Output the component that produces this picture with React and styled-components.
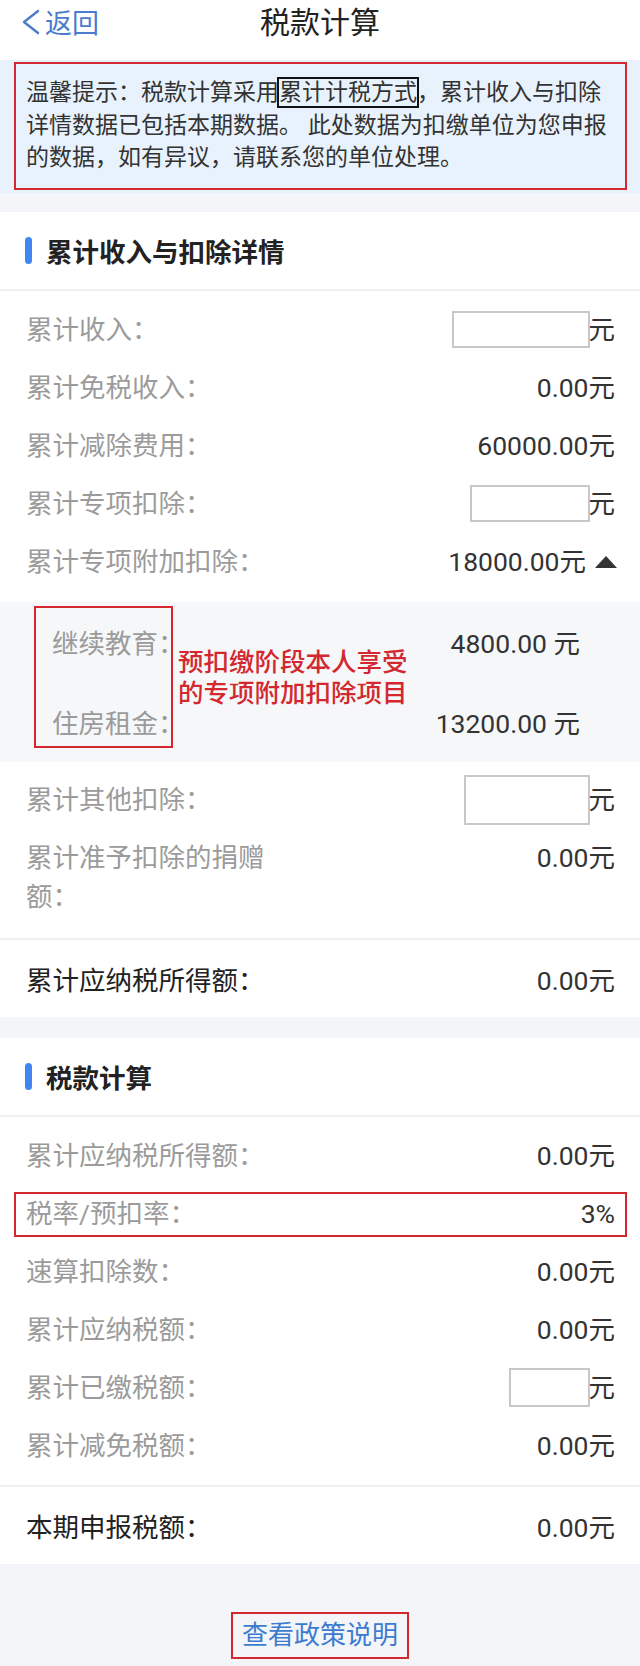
import React from 'react';
import styled, { createGlobalStyle } from 'styled-components';

const GlobalStyle = createGlobalStyle`
  body {
    margin: 0;
    background: #f3f5f8;
    font-family: Roboto, "Noto Sans CJK SC", sans-serif;
    color: #333;
  }
  * { box-sizing: border-box; }
`;

const Page = styled.div`
  width: 640px;
  background: #f3f5f8;
`;

const NavBar = styled.header`
  height: 60px;
  background: #fff;
  display: grid;
  grid-template-columns: 1fr auto 1fr;
  align-items: start;
`;

const BackLink = styled.a`
  display: flex;
  align-items: center;
  gap: 5px;
  padding-left: 21px;
  height: 43px;
  color: #4a7bcc;
  font-size: 27px;
  text-decoration: none;
`;

const Title = styled.h1`
  margin: 0;
  font-size: 30px;
  font-weight: 400;
  line-height: 46px;
  color: #222;
`;

const NoticeWrap = styled.div`
  background: #e8f2fc;
  padding: 2px 13px 3px 14px;
`;

const NoticeBox = styled.p`
  margin: 0;
  border: 2px solid #d3282f;
  padding: 13px 6px 13px 10px;
  font-size: 23px;
  line-height: 32.5px;
  color: #333;
`;

const Boxed = styled.span`
  outline: 2px solid #111;
  outline-offset: 0;
`;

const Section = styled.section`
  background: #fff;
  margin-top: ${(p) => p.$gap}px;
`;

const SectionHeader = styled.div`
  height: 79px;
  display: flex;
  align-items: center;
  gap: 14px;
  padding-left: 25px;
  border-bottom: 2px solid #eeeff1;
  font-size: 26.5px;
  font-weight: 700;
  color: #222;

  &::before {
    content: '';
    width: 7px;
    height: 27px;
    border-radius: 4px;
    background: #3f86f0;
  }
`;

const RowList = styled.div`
  padding: ${(p) => p.$pad};
`;

const Row = styled.div`
  position: relative;
  display: flex;
  justify-content: space-between;
  align-items: ${(p) => (p.$multi ? 'flex-start' : 'center')};
  min-height: 58px;
  padding: ${(p) => (p.$multi ? '9.5px' : '0')} 25px ${(p) => (p.$multi ? '9.5px' : '0')} 26px;
  font-size: 26.5px;
  line-height: 39px;

  ${(p) =>
    p.$flagged &&
    `
    &::after {
      content: '';
      position: absolute;
      left: 14px;
      right: 13px;
      top: 7px;
      bottom: 6px;
      border: 2px solid #d3282f;
    }
  `}
`;

const Label = styled.span`
  max-width: 250px;
  color: ${(p) => (p.$dark ? '#222' : '#9b9b9b')};
`;

const Value = styled.span`
  display: flex;
  align-items: center;
  color: #333;
  white-space: nowrap;
`;

const AmountBox = styled.input`
  width: ${(p) => p.$w}px;
  height: ${(p) => p.$h}px;
  margin-right: -1px;
  padding: 0;
  border: 2px solid #c8c8c8;
  background: #fff;
  outline: none;
`;

const Caret = styled.span`
  width: 0;
  height: 0;
  margin-left: 9px;
  margin-right: -2px;
  border-left: 11px solid transparent;
  border-right: 11px solid transparent;
  border-bottom: 12px solid #333;
`;

const SubPanel = styled.div`
  position: relative;
  margin: 11px 0 9px;
  background: #f6f7f9;
`;

const SubRow = styled.div`
  height: 80px;
  display: flex;
  align-items: center;
  justify-content: space-between;
  padding: 0 60px 0 52px;
  font-size: 26.5px;
`;

const LabelFrame = styled.div`
  position: absolute;
  left: 34px;
  top: 4px;
  width: 139px;
  bottom: 14px;
  border: 2px solid #d3282f;
`;

const Note = styled.div`
  position: absolute;
  left: 178px;
  top: 45px;
  font-size: 25.5px;
  line-height: 31px;
  font-weight: 500;
  color: #d3282f;
`;

const Summary = styled.div`
  height: 79px;
  display: flex;
  align-items: center;
  justify-content: space-between;
  padding: 0 25px 0 26px;
  border-top: 2px solid #eeeff1;
  font-size: 26.5px;
`;

const Footer = styled.div`
  height: 102px;
  padding-top: 48px;
  text-align: center;
`;

const PolicyLink = styled.a`
  display: inline-block;
  padding: 0 9px;
  border: 2px solid #d3282f;
  font-size: 26px;
  line-height: 43px;
  color: #3d7bd0;
  text-decoration: none;
`;

const ChevronLeft = () => (
  <svg width="19" height="26" viewBox="0 0 19 26" fill="none">
    <polyline points="17,2 3,13 17,24" stroke="#4a7bcc" strokeWidth="2.4" strokeLinecap="round" strokeLinejoin="round" />
  </svg>
);

const Entry = ({ label, value, box, caret, multi, flagged }) => (
  <Row $multi={multi} $flagged={flagged}>
    <Label>{label}</Label>
    <Value>
      {box ? <AmountBox readOnly $w={box[0]} $h={box[1]} /> : value}
      {box && '元'}
      {caret && <Caret />}
    </Value>
  </Row>
);

const incomeRows = [
  { label: '累计收入：', box: [138, 37] },
  { label: '累计免税收入：', value: '0.00元' },
  { label: '累计减除费用：', value: '60000.00元' },
  { label: '累计专项扣除：', box: [120, 37] },
  { label: '累计专项附加扣除：', value: '18000.00元', caret: true },
];

const taxRows = [
  { label: '累计应纳税所得额：', value: '0.00元' },
  { label: '税率/预扣率：', value: '3%', flagged: true },
  { label: '速算扣除数：', value: '0.00元' },
  { label: '累计应纳税额：', value: '0.00元' },
  { label: '累计已缴税额：', box: [81, 39] },
  { label: '累计减免税额：', value: '0.00元' },
];

export default function App() {
  return (
    <Page>
      <GlobalStyle />
      <NavBar>
        <BackLink href="#">
          <ChevronLeft />
          返回
        </BackLink>
        <Title>税款计算</Title>
        <span />
      </NavBar>

      <NoticeWrap>
        <NoticeBox>
          温馨提示：税款计算采用<Boxed>累计计税方式</Boxed>，累计收入与扣除
          <br />
          详情数据已包括本期数据。 此处数据为扣缴单位为您申报
          <br />
          的数据，如有异议，请联系您的单位处理。
        </NoticeBox>
      </NoticeWrap>

      <Section $gap={19}>
        <SectionHeader>累计收入与扣除详情</SectionHeader>
        <RowList $pad="10px 0 0">
          {incomeRows.map((r) => (
            <Entry key={r.label} {...r} />
          ))}
        </RowList>
        <SubPanel>
          <SubRow>
            <Label>继续教育：</Label>
            <Value>4800.00 元</Value>
          </SubRow>
          <SubRow>
            <Label>住房租金：</Label>
            <Value>13200.00 元</Value>
          </SubRow>
          <LabelFrame />
          <Note>
            预扣缴阶段本人享受
            <br />
            的专项附加扣除项目
          </Note>
        </SubPanel>
        <RowList $pad="0 0 12px">
          <Entry label="累计其他扣除：" box={[126, 50]} />
          <Entry label="累计准予扣除的捐赠额：" value="0.00元" multi />
        </RowList>
        <Summary>
          <Label $dark>累计应纳税所得额：</Label>
          <Value>0.00元</Value>
        </Summary>
      </Section>

      <Section $gap={21}>
        <SectionHeader>税款计算</SectionHeader>
        <RowList $pad="10px 0">
          {taxRows.map((r) => (
            <Entry key={r.label} {...r} />
          ))}
        </RowList>
        <Summary>
          <Label $dark>本期申报税额：</Label>
          <Value>0.00元</Value>
        </Summary>
      </Section>

      <Footer>
        <PolicyLink href="#">查看政策说明</PolicyLink>
      </Footer>
    </Page>
  );
}
